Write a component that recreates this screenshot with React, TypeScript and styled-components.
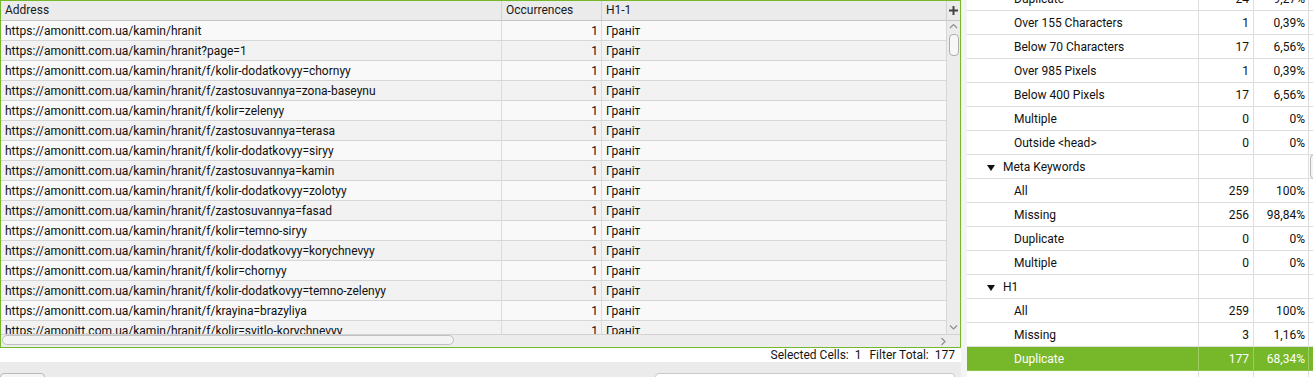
import React from 'react';
import styled, { createGlobalStyle } from 'styled-components';

const GREEN = '#77b72a';

const GlobalStyle = createGlobalStyle`
  html, body {
    margin: 0;
    padding: 0;
    background: #ffffff;
    overflow: hidden;
  }
  body {
    font-family: Roboto, "Noto Sans", "Liberation Sans", sans-serif;
    font-size: 12px;
    color: #101010;
  }
`;

// Layout
const Screen = styled.div`
  display: flex;
  width: 1313px;
  height: 377px;
  overflow: hidden;
`;

const LeftColumn = styled.div`
  width: 961px;
  flex: none;
  display: flex;
  flex-direction: column;
`;

const Splitter = styled.div`
  width: 6px;
  flex: none;
  background: #f4f4f4;
`;

// Left table
const TablePanel = styled.div`
  height: 348px;
  flex: none;
  box-sizing: border-box;
  border: 1px solid ${GREEN};
  display: flex;
  flex-direction: column;
  overflow: hidden;
`;

const HeaderRow = styled.div`
  height: 20px;
  flex: none;
  box-sizing: border-box;
  display: flex;
  background: #ebebeb;
  border-bottom: 1px solid #c6c6c6;
`;

const HeadCell = styled.div<{ $w?: number }>`
  ${p => (p.$w ? `width: ${p.$w}px; flex: none;` : 'flex: 1;')}
  box-sizing: border-box;
  border-right: 1px solid #d2d2d2;
  padding-left: 4px;
  line-height: 19px;
  color: #1a1a1a;
  white-space: nowrap;
  overflow: hidden;
`;

const AddCell = styled.div`
  width: 13px;
  flex: none;
  display: flex;
  align-items: center;
  justify-content: center;
`;

const BodyArea = styled.div`
  flex: 1;
  display: flex;
  min-height: 0;
`;

const Rows = styled.div`
  flex: 1;
  overflow: hidden;
`;

const Row = styled.div<{ $alt: boolean }>`
  height: 20px;
  box-sizing: border-box;
  display: flex;
  background: ${p => (p.$alt ? '#f2f2f2' : '#f9f9f9')};
  border-bottom: 1px solid #d6d6d6;
`;

const Cell = styled.div<{ $w?: number; $right?: boolean }>`
  ${p => (p.$w ? `width: ${p.$w}px; flex: none;` : 'flex: 1;')}
  box-sizing: border-box;
  border-right: ${p => (p.$w ? '1px solid #dcdcdc' : 'none')};
  padding: ${p => (p.$right ? '0 3px 0 0' : '0 0 0 4px')};
  text-align: ${p => (p.$right ? 'right' : 'left')};
  line-height: 20px;
  white-space: nowrap;
  overflow: hidden;
`;

const VScroll = styled.div`
  width: 14px;
  flex: none;
  box-sizing: border-box;
  border-left: 1px solid #d6d6d6;
  background: #ececec;
  display: flex;
  flex-direction: column;
  align-items: center;
  padding: 2px 0 3px;
`;

const VThumb = styled.div`
  width: 10px;
  height: 22px;
  box-sizing: border-box;
  margin-top: 4px;
  border: 1px solid #adadad;
  border-radius: 4px;
  background: #f7f7f7;
`;

const Fill = styled.div`
  flex: 1;
`;

const HScroll = styled.div`
  height: 13px;
  flex: none;
  box-sizing: border-box;
  border-top: 1px solid #d2d2d2;
  background: #ececec;
  display: flex;
  align-items: flex-start;
  padding-left: 1px;
`;

const HThumb = styled.div`
  width: 452px;
  height: 10px;
  box-sizing: border-box;
  border: 1px solid #c0c0c0;
  border-radius: 5px;
  background: #f3f3f3;
`;

const HArrow = styled.div`
  margin-left: auto;
  margin-right: 13px;
  margin-top: 2px;
  display: flex;
`;

// Status and footer
const StatusLine = styled.div`
  height: 14px;
  flex: none;
  display: flex;
  justify-content: flex-end;
  align-items: center;
  gap: 8px;
  padding-right: 6px;
  background: #ffffff;
  color: #141414;
  line-height: 14px;
`;

const StatusPair = styled.span`
  display: flex;
  gap: 6px;
`;

const Footer = styled.div`
  flex: 1;
  min-height: 0;
  overflow: hidden;
  background: #ebebeb;
  display: flex;
  justify-content: space-between;
  align-items: flex-start;
  padding-top: 11px;
  padding-right: 6px;
`;

const FooterButton = styled.div`
  width: 45px;
  height: 14px;
  flex: none;
  box-sizing: border-box;
  border: 1px solid #b8b8b8;
  border-radius: 4px;
  background: #f5f5f5;
`;

const FooterField = styled.div`
  width: 300px;
  height: 14px;
  flex: none;
  box-sizing: border-box;
  border: 1px solid #c9c9c9;
  border-radius: 4px;
  background: #ffffff;
`;

// Right overview tree
const RightPane = styled.div`
  flex: 1;
  position: relative;
  overflow: hidden;
  background: #ffffff;
`;

const TreeList = styled.div`
  margin-top: -13px;
`;

const TreeRow = styled.div<{ $selected?: boolean }>`
  height: 24px;
  box-sizing: border-box;
  display: flex;
  background: ${p => (p.$selected ? GREEN : '#ffffff')};
  color: ${p => (p.$selected ? '#ffffff' : '#101010')};
  border-bottom: 1px solid ${p => (p.$selected ? '#8cc44a' : '#dedede')};
`;

const TreeLabel = styled.div<{ $group?: boolean; $selected?: boolean }>`
  width: 232px;
  flex: none;
  box-sizing: border-box;
  border-right: 1px solid ${p => (p.$selected ? '#9ccc62' : '#dedede')};
  padding-left: ${p => (p.$group ? '20px' : '47px')};
  padding-top: 1px;
  display: flex;
  align-items: center;
  gap: 8px;
  white-space: nowrap;
`;

const TreeNum = styled.div<{ $selected?: boolean; $pad: number }>`
  width: 55px;
  flex: none;
  box-sizing: border-box;
  border-right: 1px solid ${p => (p.$selected ? '#9ccc62' : '#dedede')};
  padding-right: ${p => p.$pad}px;
  text-align: right;
  line-height: 25px;
`;

const Caret = styled.span`
  width: 0;
  height: 0;
  border-left: 4px solid transparent;
  border-right: 4px solid transparent;
  border-top: 6px solid #111;
  margin-top: 1px;
`;

const TreeThumb = styled.div`
  position: absolute;
  left: 343px;
  top: 154px;
  width: 9px;
  height: 25px;
  box-sizing: border-box;
  border: 1px solid #b6b6b6;
  border-radius: 4px;
  background: #f4f4f4;
`;

const Chevron = ({ dir }: { dir: 'up' | 'down' | 'right' }) => {
  const points =
    dir === 'up' ? '1,5 4.5,1.5 8,5' : dir === 'down' ? '1,1.5 4.5,5 8,1.5' : '1.5,1 5,4.5 1.5,8';
  const size = dir === 'right' ? { w: 7, h: 9 } : { w: 9, h: 7 };
  return (
    <svg width={size.w} height={size.h} viewBox={`0 0 ${size.w} ${size.h}`}>
      <polyline points={points} fill="none" stroke="#8c8c8c" strokeWidth="1.1" />
    </svg>
  );
};

const base = 'https://amonitt.com.ua/kamin/hranit';
const urls = [
  base,
  `${base}?page=1`,
  `${base}/f/kolir-dodatkovyy=chornyy`,
  `${base}/f/zastosuvannya=zona-baseynu`,
  `${base}/f/kolir=zelenyy`,
  `${base}/f/zastosuvannya=terasa`,
  `${base}/f/kolir-dodatkovyy=siryy`,
  `${base}/f/zastosuvannya=kamin`,
  `${base}/f/kolir-dodatkovyy=zolotyy`,
  `${base}/f/zastosuvannya=fasad`,
  `${base}/f/kolir=temno-siryy`,
  `${base}/f/kolir-dodatkovyy=korychnevyy`,
  `${base}/f/kolir=chornyy`,
  `${base}/f/kolir-dodatkovyy=temno-zelenyy`,
  `${base}/f/krayina=brazyliya`,
  `${base}/f/kolir=svitlo-korychnevyy`,
];

type TreeItem = { label: string; count?: string; pct?: string; group?: boolean; selected?: boolean };

const tree: TreeItem[] = [
  { label: 'Duplicate', count: '24', pct: '9,27%' },
  { label: 'Over 155 Characters', count: '1', pct: '0,39%' },
  { label: 'Below 70 Characters', count: '17', pct: '6,56%' },
  { label: 'Over 985 Pixels', count: '1', pct: '0,39%' },
  { label: 'Below 400 Pixels', count: '17', pct: '6,56%' },
  { label: 'Multiple', count: '0', pct: '0%' },
  { label: 'Outside <head>', count: '0', pct: '0%' },
  { label: 'Meta Keywords', group: true },
  { label: 'All', count: '259', pct: '100%' },
  { label: 'Missing', count: '256', pct: '98,84%' },
  { label: 'Duplicate', count: '0', pct: '0%' },
  { label: 'Multiple', count: '0', pct: '0%' },
  { label: 'H1', group: true },
  { label: 'All', count: '259', pct: '100%' },
  { label: 'Missing', count: '3', pct: '1,16%' },
  { label: 'Duplicate', count: '177', pct: '68,34%', selected: true },
  { label: '' },
];

export default function App() {
  return (
    <>
      <GlobalStyle />
      <Screen>
        <LeftColumn>
          <TablePanel>
            <HeaderRow>
              <HeadCell $w={501}>Address</HeadCell>
              <HeadCell $w={100}>Occurrences</HeadCell>
              <HeadCell>H1-1</HeadCell>
              <AddCell>
                <svg width="9" height="9" viewBox="0 0 9 9">
                  <path d="M3.5 0h2v3.5H9v2H5.5V9h-2V5.5H0v-2h3.5z" fill="#444" />
                </svg>
              </AddCell>
            </HeaderRow>
            <BodyArea>
              <Rows>
                {urls.map((url, i) => (
                  <Row key={url} $alt={i % 2 === 1}>
                    <Cell $w={501}>{url}</Cell>
                    <Cell $w={100} $right>1</Cell>
                    <Cell>Граніт</Cell>
                  </Row>
                ))}
              </Rows>
              <VScroll>
                <Chevron dir="up" />
                <VThumb />
                <Fill />
                <Chevron dir="down" />
              </VScroll>
            </BodyArea>
            <HScroll>
              <HThumb />
              <HArrow>
                <Chevron dir="right" />
              </HArrow>
            </HScroll>
          </TablePanel>
          <StatusLine>
            <StatusPair>
              <span>Selected Cells:</span>
              <span>1</span>
            </StatusPair>
            <StatusPair>
              <span>Filter Total:</span>
              <span>177</span>
            </StatusPair>
          </StatusLine>
          <Footer>
            <FooterButton />
            <FooterField />
          </Footer>
        </LeftColumn>
        <Splitter />
        <RightPane>
          <TreeList>
            {tree.map((item, i) => (
              <TreeRow key={i} $selected={item.selected}>
                <TreeLabel $group={item.group} $selected={item.selected}>
                  {item.group && <Caret />}
                  {item.label}
                </TreeLabel>
                <TreeNum $pad={4} $selected={item.selected}>{item.count}</TreeNum>
                <TreeNum $pad={3} $selected={item.selected}>{item.pct}</TreeNum>
              </TreeRow>
            ))}
          </TreeList>
          <TreeThumb />
        </RightPane>
      </Screen>
    </>
  );
}
